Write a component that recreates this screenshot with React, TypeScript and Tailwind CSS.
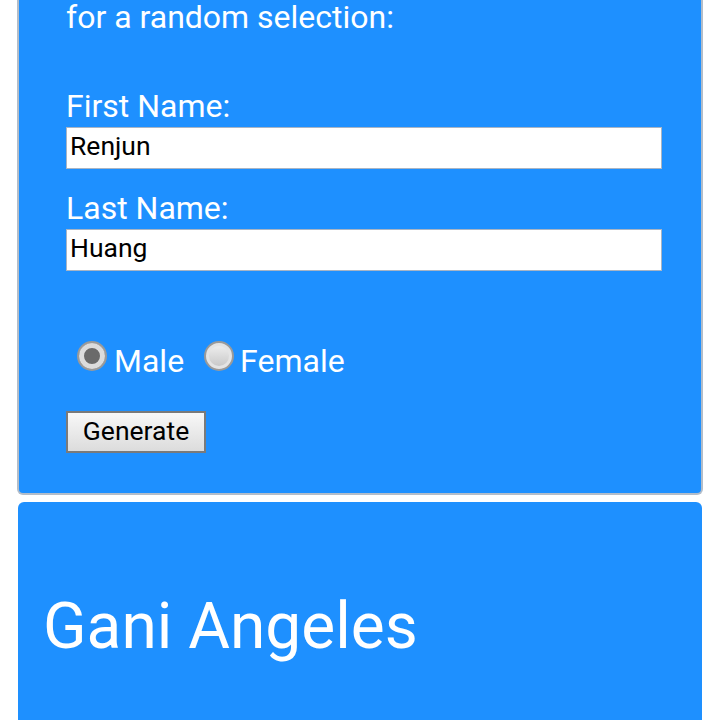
import { useState } from 'react';

// Name generator form + result card

export default function App() {
  const [first, setFirst] = useState('Renjun');
  const [last, setLast] = useState('Huang');
  const [gender, setGender] = useState<'male' | 'female'>('male');

  const radioCls =
    'appearance-none shrink-0 w-[30px] h-[30px] rounded-full border-2 border-[#9a9a9a] bg-gradient-to-b from-[#f2f2f2] to-[#c4c4c4] shadow-[inset_0_0_0_3px_#e4e4e4] checked:shadow-[inset_0_0_0_5px_#dcdcdc,inset_0_0_0_14px_#6a6a6a] m-0 -mt-[12px]';

  const inputCls =
    'block w-full h-[42px] bg-white border border-[#a8b4c4] text-black text-[26.5px] pl-[3px] pt-0 pb-[6px] outline-none';

  return (
    <div className="min-h-screen bg-white font-['Roboto',sans-serif] text-white">
      {/* Formulario */}
      <div className="mx-[17px] bg-[#1e90ff] border-2 border-t-0 border-[#b3bdc9] rounded-b-md pl-[47px] pr-[39px] pb-[40px]">
        <p className="text-[32px] leading-[37px] -mt-[1px]">for a random selection:</p>

        <label className="block text-[32px] leading-[37px] mt-[52px]">First Name:</label>
        <input value={first} onChange={(e) => setFirst(e.target.value)} className={inputCls + ' mt-[2px]'} />

        <label className="block text-[32px] leading-[37px] mt-[21px]">Last Name:</label>
        <input value={last} onChange={(e) => setLast(e.target.value)} className={inputCls + ' mt-[2px]'} />

        <div className="flex items-center mt-[72px] pl-[11px] h-[37px]">
          <input
            type="radio"
            name="g"
            checked={gender === 'male'}
            onChange={() => setGender('male')}
            className={radioCls}
          />
          <span className="text-[32px] leading-[37px] ml-[7px]">Male</span>
          <input
            type="radio"
            name="g"
            checked={gender === 'female'}
            onChange={() => setGender('female')}
            className={radioCls + ' ml-[20px]'}
          />
          <span className="text-[32px] leading-[37px] ml-[6px]">Female</span>
        </div>

        <button
          type="button"
          className="flex items-center justify-center mt-[31px] w-[140px] h-[42px] border-2 border-[#7a7a7a] bg-gradient-to-b from-[#f8f8f8] to-[#dcdcdc] text-black text-[26.5px] leading-none pb-[2px]"
        >
          Generate
        </button>
      </div>

      {/* Resultado */}
      <div className="mx-[18px] mt-[7px] bg-[#1e90ff] rounded-t-md pl-[25px] pt-[87px] h-[260px]">
        <h1 className="text-[64px] leading-[75px]">Gani Angeles</h1>
      </div>
    </div>
  );
}
